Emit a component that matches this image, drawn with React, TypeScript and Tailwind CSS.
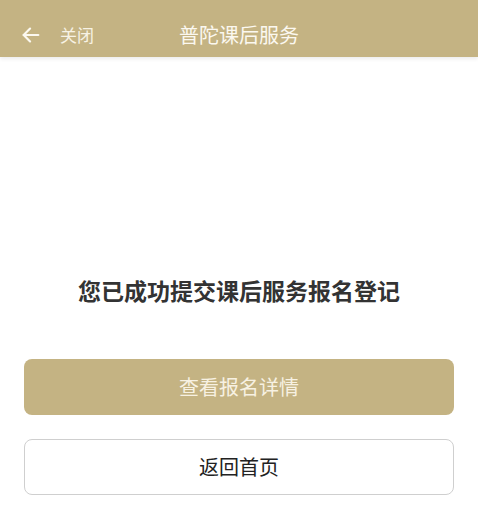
import React from 'react';

const font = { fontFamily: '"Noto Sans CJK SC", "Noto Sans", sans-serif' };

const App: React.FC = () => {
  return (
    <div className="w-[478px] h-[516px] bg-white overflow-hidden" style={font}>
      {/* header */}
      <div className="relative h-[57px] bg-[#c4b383] flex items-center shadow-[0_2px_4px_rgba(0,0,0,0.08)]">
        <div className="flex items-center pl-[20px] pt-[12px]">
          <svg width="22" height="22" viewBox="0 0 24 24" fill="none" stroke="#fbf8f0" strokeWidth="2.4" strokeLinecap="round" strokeLinejoin="round">
            <path d="M20 12H4" />
            <path d="M11 5l-7 7 7 7" />
          </svg>
          <span className="ml-[18px] text-[17px] text-[#f7f2e4]">关闭</span>
        </div>
        <div className="absolute inset-x-0 top-0 h-full flex items-center justify-center pt-[12px] pointer-events-none">
          <span className="text-[20px] text-[#fbf8f0]">普陀课后服务</span>
        </div>
      </div>

      {/* body */}
      <div className="px-[24px]">
        <h1 className="mt-[218px] text-center text-[23px] font-bold text-[#333333] leading-[30px]">
          您已成功提交课后服务报名登记
        </h1>
        <button className="mt-[54px] w-full h-[56px] rounded-[8px] bg-[#c4b383] text-[20px] text-[#f7f1e2]">
          查看报名详情
        </button>
        <button className="mt-[24px] w-full h-[56px] rounded-[8px] border border-[#cfcfcf] bg-white text-[20px] text-[#222222]">
          返回首页
        </button>
      </div>
    </div>
  );
};

export default App;
